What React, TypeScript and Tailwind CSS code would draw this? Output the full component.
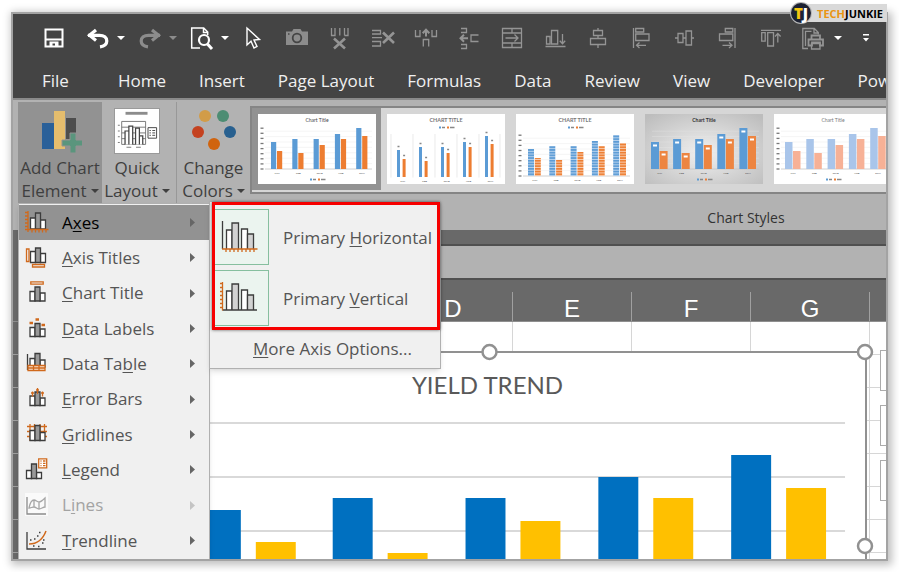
import type { ReactNode } from "react";
import clsx from "clsx";

const TABS = ["Home", "Insert", "Page Layout", "Formulas", "Data", "Review", "View", "Developer", "Power"];
// The first columns sit under the open menus, so their letters stay blank
const COLUMNS = ["", "", "", "D", "E", "F", "G", ""];
const ROWS = [1, 2, 3, 4, 5, 6, 7, 8];

const ORANGE = "#d0691c";
const INK = "#3c3c3c";

// ---------- Quick access toolbar ----------

function ToolIcon({ children, className }: { children: ReactNode; className?: string }) {
  return (
    <svg
      viewBox="0 0 24 24"
      className={clsx("size-6 shrink-0", className)}
      fill="none"
      stroke="currentColor"
      strokeWidth={1.3}
      aria-hidden="true"
    >
      {children}
    </svg>
  );
}

function Caret({ className }: { className?: string }) {
  return (
    <svg viewBox="0 0 8 4" className={clsx("h-1 w-2 shrink-0", className)} fill="currentColor" aria-hidden="true">
      <path d="M0 0h8L4 4z" />
    </svg>
  );
}

const undoShape = (
  <>
    <path d="M2 9.300h11.500c4.500 0 7.300 2.300 7.300 5.700 0 3.200-2.700 5.200-6.800 5.800" strokeWidth={3.2} />
    <path d="M10 4L3.500 9.300l6.500 5.200" strokeWidth={3.2} />
  </>
);

// Disabled commands after the pointer, in toolbar order
const TOOLS: { label: string; icon: ReactNode }[] = [
  {
    label: "Camera",
    icon: (
      <>
        <path d="M1 5.500h6l1.500-2.500h7L17 5.500h6V19H1z" fill="#8c8c8c" stroke="none" />
        <circle cx="12" cy="12" r="4.300" stroke="#444" strokeWidth={1.8} />
        <path d="M3 8h1.500" stroke="#444" />
      </>
    ),
  },
  {
    label: "Delete Columns",
    icon: (
      <>
        <path d="M3.500 2v7.500h3.500V2M11.800 2v7.500M16.500 9.500H20V2M16.500 2v7.500" />
        <path d="M6 12.500l11 10M17 12.500l-11 10" strokeWidth={2.6} />
      </>
    ),
  },
  {
    label: "Delete Rows",
    icon: (
      <>
        <path d="M1 4.500h8.500v3.500H1M1 11.700h10M1 15.500h8.500V20H1" />
        <path d="M12 6.500l11 10.500M23 6.500L12 17" strokeWidth={2.6} />
      </>
    ),
  },
  {
    label: "Insert Columns",
    icon: (
      <>
        <path d="M1.500 4v6.500H6V4M18 4v6.500h4.500V4M9.300 20.500v-7h5.400v7" />
        <path d="M12 10.500V4M8.700 7.200L12 3.800l3.300 3.400" strokeWidth={2} />
      </>
    ),
  },
  {
    label: "Insert Rows",
    icon: (
      <>
        <path d="M4 2.500h5.500v4H4M4 18.500h5.500v4H4M21.500 9H14v6.500h7.500" />
        <path d="M11 12.300H3.500M7 8.800l-3.500 3.500L7 15.800" strokeWidth={2} />
      </>
    ),
  },
  {
    label: "Merge Across",
    icon: (
      <>
        <path d="M2.500 2.500h19v19h-19zM2.500 7h19M2.500 17h19M12 2.500V7M12 17v4.500" />
        <path d="M5.500 12H18M14.500 8.500L18 12l-3.500 3.500" />
      </>
    ),
  },
  {
    label: "Align Bottom",
    icon: (
      <>
        <path d="M3.500 10.500H7V18H3.500zM8.500 4.500h6.200V18H8.500zM2.500 20.500h20" />
        <path d="M19.500 8v9.500M16.800 14.800l2.700 3 2.700-3" />
      </>
    ),
  },
  {
    label: "Align Center",
    icon: <path d="M12 2v2.500M7.500 4.500h9v5h-9zM12 9.500v3M4.500 12.500h15v6h-15zM12 18.500V22" />,
  },
  {
    label: "Align Left",
    icon: (
      <>
        <path d="M4.500 2v20M6.700 2.500h8v3.500h-8zM6.700 8h13.300v6.500H6.700z" />
        <path d="M17 19.300H7.500M10.500 16.500l-3 2.800 3 2.800" />
      </>
    ),
  },
  {
    label: "Align Middle",
    icon: <path d="M3 12h3M6 7.500h5v9H6zM11 12h3M14 5h5.500v14H14zM19.500 12H22" />,
  },
  {
    label: "Align Right",
    icon: (
      <>
        <path d="M20 2v20M10.300 2.500h7.500v3.500h-7.500zM4.500 8h13.300v6.500H4.500z" />
        <path d="M7.500 19.300H17M14 16.500l3 2.800-3 2.800" />
      </>
    ),
  },
  {
    label: "Align Top",
    icon: (
      <>
        <path d="M3 4.300h20M3.700 6.700h3.500v8.500H3.700zM9.700 6.700h5.800V20H9.700z" />
        <path d="M19.800 16.500V8M17 10.500l2.800-3 2.800 3" />
      </>
    ),
  },
  {
    label: "Print Preview",
    icon: (
      <>
        <path d="M7 22.500H1.800V2.500h11.500l4 4v2M13 2.500V7h4.300M4.500 20V5.300h6" />
        <path d="M10.500 13V9.500h8.500V13M7.500 13.500H22v6h-3v-3h-8v3H7.500z" strokeWidth={1.8} />
        <path d="M10.500 17.500h8.500v5.500h-8.500z" />
      </>
    ),
  },
];

const toolButton = "flex h-8 shrink-0 items-center justify-center";

function QuickAccess() {
  return (
    <div className="flex h-12 items-center gap-1.5 pl-5 text-white">
      <button className={clsx(toolButton, "w-[42px]")} aria-label="Save">
        <ToolIcon>
          <path d="M3.500 3.500h17v17h-17z" strokeWidth={2} />
          <path d="M4 13.500h16" strokeWidth={2} />
          <path d="M7.500 15.500h9V21H13v-3.500h-2.500V21h-3z" fill="currentColor" stroke="none" />
        </ToolIcon>
      </button>
      <div className="flex">
        <button className={clsx(toolButton, "w-[34px]")} aria-label="Undo">
          <ToolIcon>{undoShape}</ToolIcon>
        </button>
        <button className={clsx(toolButton, "w-3")} aria-label="Undo list">
          <Caret />
        </button>
      </div>
      <div className="flex text-[#8c8c8c]">
        <button className={clsx(toolButton, "w-[34px]")} aria-label="Redo">
          <ToolIcon className="-scale-x-100">{undoShape}</ToolIcon>
        </button>
        <button className={clsx(toolButton, "w-3")} aria-label="Redo list">
          <Caret />
        </button>
      </div>
      <div className="flex">
        <button className={clsx(toolButton, "w-[34px]")} aria-label="Preview">
          <ToolIcon>
            <path d="M10 22H1.700V2h12l4 4v3M13.500 2v4.500h4" strokeWidth={1.5} />
            <circle cx="14" cy="14" r="5" strokeWidth={2.2} />
            <path d="M17.500 18l4.500 5" strokeWidth={3} />
          </ToolIcon>
        </button>
        <button className={clsx(toolButton, "w-3")} aria-label="Preview list">
          <Caret />
        </button>
      </div>
      <div className="flex items-center text-[#949494]">
        <button className={clsx(toolButton, "w-8 text-white")} aria-label="Select Objects">
          <ToolIcon>
            <path d="M6 2v17l4-3.700 3 6.700 3-1.500-3-6.500 5.500-.5z" strokeWidth={1.4} />
          </ToolIcon>
        </button>
        <div className="flex pl-1.5">
          {TOOLS.map((tool) => (
            <button key={tool.label} className={clsx(toolButton, "w-[43px]")} aria-label={tool.label}>
              <ToolIcon>{tool.icon}</ToolIcon>
            </button>
          ))}
        </div>
        <button className={clsx(toolButton, "w-2 text-white")} aria-label="Print list">
          <Caret />
        </button>
        <button className={clsx(toolButton, "w-12 text-white")} aria-label="Customize Quick Access Toolbar">
          <svg viewBox="0 0 8 8" className="size-2" fill="currentColor" aria-hidden="true">
            <path d="M1 0h6v1.500H1zM1 4h6L4 7.500z" />
          </svg>
        </button>
      </div>
    </div>
  );
}

// ---------- Ribbon ----------

function AddElementIcon() {
  return (
    <svg viewBox="0 0 44 44" className="size-11" aria-hidden="true">
      <path d="M4 14h12v26H4z" fill="#2a6099" />
      <path d="M16 2h11v38H16z" fill="#e5bd6d" />
      <path d="M28 9h10v21H28z" fill="#4d4d4d" />
      <path d="M32 24h6v7h7v6h-7v7h-6v-7h-8v-6h8z" fill="#5a957d" stroke="#929292" />
    </svg>
  );
}

function QuickLayoutIcon() {
  return (
    <svg viewBox="0 0 46 46" className="size-[46px] border border-[#9a9a9a] bg-white" fill="none" stroke="#444" aria-hidden="true">
      <path d="M11 4.500h23" stroke="#8c8c8c" strokeWidth={3} />
      <path d="M7 13h25v24H7zM7 19h25M7 25h25M7 31h25" stroke="#777" />
      <path d="M10.500 37V23h4v14M14.500 37V18h4v19M21.500 37V20h4v17M25.500 37V28h3.500v9" fill="#fff" strokeWidth={1.3} />
      <path d="M3 17h2M3 23h2M3 29h2M3 35h2M12 40h5M22 40h5" stroke="#777" />
      <path d="M34.500 19.500h9v11h-9z" />
      <path d="M36 22.500h1.500M39 22.500h3M36 25h1.500M39 25h3M36 27.500h1.500M39 27.500h3" />
    </svg>
  );
}

function ChangeColorsIcon() {
  return (
    <svg viewBox="0 0 44 44" className="size-11" aria-hidden="true">
      <circle cx="13" cy="7" r="6" fill="#d29c48" />
      <circle cx="31" cy="7" r="6" fill="#4d8d73" />
      <circle cx="6" cy="23" r="6" fill="#c44220" />
      <circle cx="38" cy="23" r="6" fill="#28608f" />
      <circle cx="22" cy="35" r="6" fill="#d0640f" />
    </svg>
  );
}

function RibbonButton({
  icon,
  lines,
  className,
}: {
  icon: ReactNode;
  lines: [string, string];
  className?: string;
}) {
  return (
    <button
      className={clsx(
        "flex h-[101px] shrink-0 flex-col items-center whitespace-nowrap pt-1 text-[17px] leading-[23px] text-[#3f3f3f]",
        className,
      )}
    >
      <span className="flex h-[50px] items-center">{icon}</span>
      <span>{lines[0]}</span>
      <span className="flex items-center gap-1">
        {lines[1]}
        <Caret />
      </span>
    </button>
  );
}

interface ThumbStyle {
  title: string;
  titleWeight: number;
  titleColor: string;
  blue: string;
  orange: string;
  x: number;
  step: number;
  width: number;
  gap: number;
  base: number;
  bg: string;
  legendTop?: boolean;
  axis?: boolean;
  labels?: "above" | "inside";
  vertical?: boolean;
}

const THUMBS: ThumbStyle[] = [
  { title: "Chart Title", titleWeight: 400, titleColor: "#444", blue: "#5b9bd5", orange: "#ed7d31", x: 13, step: 21.3, width: 5.2, gap: 6, base: 55, bg: "#fff", axis: true },
  { title: "CHART TITLE", titleWeight: 700, titleColor: "#777", blue: "#5b9bd5", orange: "#ed7d31", x: 10, step: 22, width: 3, gap: 5.6, base: 63, bg: "#fff", legendTop: true, labels: "above", vertical: true },
  { title: "CHART TITLE", titleWeight: 700, titleColor: "#777", blue: "url(#stripeBlue)", orange: "url(#stripeOrange)", x: 12, step: 21.3, width: 6, gap: 6.8, base: 62, bg: "#fff", legendTop: true, axis: true },
  { title: "Chart Title", titleWeight: 700, titleColor: "#333", blue: "#5b9bd5", orange: "#ed8541", x: 6, step: 22.1, width: 8, gap: 8.6, base: 55, bg: "url(#thumbShade)", labels: "inside" },
  { title: "Chart Title", titleWeight: 400, titleColor: "#777", blue: "#a9c5ea", orange: "#f7b196", x: 11, step: 21.3, width: 7.5, gap: 8, base: 55, bg: "#fff", axis: true },
];

const BLUE_VALUES = [27, 30, 30, 35, 41];
const ORANGE_VALUES = [18, 16, 24, 30, 33];
const MONTHS = ["JAN", "FEB", "MAR", "APR", "MAY"];

function Thumb({ t }: { t: ThumbStyle }) {
  const legendY = t.legendTop ? 14.5 : 66.5;
  return (
    <svg viewBox="0 0 118 70" className="h-[70px] w-[118px]" fontFamily="Lato, sans-serif" aria-hidden="true">
      <rect width="118" height="70" fill={t.bg} />
      <text x="59" y="7.500" fontSize={t.legendTop ? 5.4 : 5} fontWeight={t.titleWeight} fill={t.titleColor} textAnchor="middle">
        {t.title}
      </text>
      {!t.vertical &&
        [0, 1, 2, 3, 4, 5, 6, 7].map((i) => (
          <path key={i} d={`M7 ${t.base - i * 5.4}H114`} stroke={i ? "#e6e6e6" : "#c4c4c4"} strokeWidth={i ? 0.4 : 0.8} />
        ))}
      {t.vertical &&
        [4, 26, 48, 70, 92, 113].map((x) => <path key={x} d={`M${x} 20V63.500`} stroke="#dcdcdc" strokeWidth=".6" />)}
      {t.axis &&
        [0, 1, 2, 3, 4, 5, 6, 7, 8].map((i) => (
          <path key={i} d={`M2.500 ${t.base - i * 5.1}h3`} stroke="#777" strokeWidth="1.300" />
        ))}
      {BLUE_VALUES.map((v, i) => {
        const x = t.x + i * t.step;
        const o = ORANGE_VALUES[i];
        return (
          <g key={i}>
            <rect x={x} y={t.base - v} width={t.width} height={v} fill={t.blue} />
            <rect x={x + t.gap} y={t.base - o} width={t.width} height={o} fill={t.orange} />
            {t.labels === "above" && (
              <path
                d={`M${x + 0.5} ${t.base - v - 3.5}h2M${x + t.gap + 0.5} ${t.base - o - 3.5}h2`}
                stroke="#888"
                strokeWidth="1.600"
              />
            )}
            {t.labels === "inside" && (
              <path
                d={`M${x + 2} ${t.base - v + 3.5}h4M${x + t.gap + 2} ${t.base - o + 3.5}h4`}
                stroke="#fff"
                strokeWidth="2"
              />
            )}
            <text x={x + t.gap} y={t.base + 4.6} fontSize="2.600" fontWeight="700" fill="#555" textAnchor="middle">
              {MONTHS[i]}
            </text>
          </g>
        );
      })}
      <rect x="52" y={legendY - 2} width="2" height="2" fill="#5b9bd5" />
      <rect x="60" y={legendY - 2} width="2" height="2" fill="#ed7d31" />
      <path d={`M55 ${legendY - 1}h3M63 ${legendY - 1}h4.500`} stroke="#888" strokeWidth="1.400" />
    </svg>
  );
}

function ChartStyles() {
  return (
    <div className="flex w-[992px] shrink-0 flex-col pt-1.5">
      <svg className="absolute size-0" aria-hidden="true">
        <defs>
          <pattern id="stripeBlue" width="4" height="2.700" patternUnits="userSpaceOnUse">
            <rect width="4" height="2.700" fill="#b9d3ee" />
            <rect width="4" height="1.700" fill="#5b9bd5" />
          </pattern>
          <pattern id="stripeOrange" width="4" height="2.700" patternUnits="userSpaceOnUse">
            <rect width="4" height="2.700" fill="#f9cfb2" />
            <rect width="4" height="1.700" fill="#ed7d31" />
          </pattern>
          <radialGradient id="thumbShade" cx=".5" cy=".55" r=".7">
            <stop offset="0" stopColor="#f0f0f0" />
            <stop offset="1" stopColor="#bdbdbd" />
          </radialGradient>
        </defs>
      </svg>
      <div className="flex border-2 border-[#858585] bg-[#d6d6d6] pb-0.5">
        {THUMBS.map((t, i) => (
          <button
            key={i}
            aria-label={`Style ${i + 1}`}
            className={clsx("flex h-[82px] w-[129px] shrink-0 items-center justify-center", i === 0 && "bg-[#929292]")}
          >
            <Thumb t={t} />
          </button>
        ))}
      </div>
      <div className="flex flex-1 items-center justify-center pt-2.5 text-[14px] text-[#333]">Chart Styles</div>
    </div>
  );
}

function Ribbon() {
  return (
    <div className="flex h-[132px] overflow-hidden border-t-2 border-[#8a8a8a] bg-[#b2b2b2] pl-[5px]">
      <div className="flex pt-0.5">
        <RibbonButton className="w-[84px] bg-[#929292]" icon={<AddElementIcon />} lines={["Add Chart", "Element"]} />
        <RibbonButton className="w-[70px]" icon={<QuickLayoutIcon />} lines={["Quick", "Layout"]} />
        <div className="ml-1 w-px bg-[#989898]" />
        <RibbonButton className="w-[73px]" icon={<ChangeColorsIcon />} lines={["Change", "Colors"]} />
      </div>
      <ChartStyles />
    </div>
  );
}

// ---------- Menus ----------

function MenuIcon({ children }: { children: ReactNode }) {
  return (
    <svg viewBox="0 0 26 24" className="h-6 w-[26px] shrink-0" fill="none" stroke={ORANGE} strokeWidth={1.3} aria-hidden="true">
      {children}
    </svg>
  );
}

// Three columns sharing one baseline; the middle one is shaded
function Bars({ x = 6, base, tops }: { x?: number; base: number; tops: [number, number, number] }) {
  return (
    <g stroke={INK} strokeWidth={1.3}>
      <path d={`M${x} ${base}V${tops[0]}h5V${base}z`} fill="#fff" />
      <path d={`M${x + 10} ${base}V${tops[2]}h5V${base}z`} fill="#fff" />
      <path d={`M${x + 5} ${base}V${tops[1]}h5V${base}z`} fill="#999" />
    </g>
  );
}

interface MenuEntry {
  before: string;
  key: string;
  after: string;
  icon: ReactNode;
  state?: "open" | "disabled";
}

const MENU: MenuEntry[] = [
  {
    before: "A",
    key: "x",
    after: "es",
    state: "open",
    icon: (
      <>
        <Bars x={6.5} base={18} tops={[7, 2, 9]} />
        <path d="M4 0v21M1 18.500h23.500M1 1.500h3M1 5h3M1 8.500h3M1 12h3M1 15.500h3M8 18.500v3M11.500 18.500v3M15 18.500v3M18.500 18.500v3M22 18.500v3" />
      </>
    ),
  },
  {
    before: "",
    key: "A",
    after: "xis Titles",
    icon: (
      <>
        <Bars x={6.5} base={16.5} tops={[5.5, 2, 7.5]} />
        <path d="M2.500 3h2.500v12.500H2.500zM8.500 18.500h12v2.500h-12z" />
      </>
    ),
  },
  {
    before: "",
    key: "C",
    after: "hart Title",
    icon: (
      <>
        <Bars base={20} tops={[10.5, 6, 12]} />
        <path d="M6.800 .8h12.400v2.400H6.800z" />
      </>
    ),
  },
  {
    before: "",
    key: "D",
    after: "ata Labels",
    icon: (
      <>
        <Bars base={19.5} tops={[10.5, 6.5, 12]} />
        <path d="M5.500 6h3.500M11.500 2.500H15M17.500 8H21" strokeWidth={2.4} />
      </>
    ),
  },
  {
    before: "Data Ta",
    key: "b",
    after: "le",
    icon: (
      <>
        <path d="M3.500 2v16" stroke={INK} />
        <Bars base={15} tops={[6.5, 1.5, 8]} />
        <path d="M4 13.500h17v5H4z" fill="#fbe3d0" />
        <path d="M4 16h17M9.500 13.500v5M15 13.500v5" />
      </>
    ),
  },
  {
    before: "",
    key: "E",
    after: "rror Bars",
    icon: (
      <>
        <Bars base={18.5} tops={[9, 5, 11]} />
        <path d="M8.500 4.500v5M7 6h3M13.500 1v6M12 3h3M18.500 4.500v5M17 6h3" />
      </>
    ),
  },
  {
    before: "",
    key: "G",
    after: "ridlines",
    icon: (
      <>
        <path d="M3 4.500h20M3 9.500h20M3 14.500h20M6 2v17M10.500 2v17M16 2v17M20.500 2v17" />
        <Bars base={18.5} tops={[8.5, 3.5, 10.5]} />
      </>
    ),
  },
  {
    before: "",
    key: "L",
    after: "egend",
    icon: (
      <>
        <Bars x={2.5} base={20.5} tops={[12.5, 6, 14.5]} />
        <path d="M14.700 .8h8v9h-8z" fill="#fff" />
        <path d="M16.500 3h1M19 3h2.500M16.500 5.300h1M19 5.300h2.500M16.500 7.600h1M19 7.600h2.500" />
      </>
    ),
  },
  {
    before: "L",
    key: "i",
    after: "nes",
    state: "disabled",
    icon: (
      <>
        <path d="M1 0h23v23H1z" fill="#fafafa" stroke="none" />
        <path d="M3 4v17h19" stroke="#8c8c8c" />
        <path d="M5 15c1-5 3-8 5-8s3 2 5 2 4-2 6-4v9c-2 0-4 2-6 2s-3-2-5-2-3 1-5 1zM10 7v7M15 9v7" stroke="#a6a6a6" />
      </>
    ),
  },
  {
    before: "",
    key: "T",
    after: "rendline",
    icon: (
      <>
        <path d="M3 4v17h19" stroke={INK} />
        <path d="M5 16c8 0 14-5 17-13" strokeWidth={1.5} />
        <path d="M6 12h1.500M10 11h1.500M13 8h1.500M15 4.500h1.500M9 18h1.500M14 18.500h1.500M18 15h1.500M19 12h1.500" stroke={INK} strokeWidth={1.5} />
      </>
    ),
  },
];

function ElementMenu() {
  return (
    <div
      role="menu"
      aria-label="Add Chart Element"
      className="absolute bottom-0 left-[5px] top-[189px] flex w-48 flex-col border border-b-0 border-[#b0b0b0] bg-[#f0f0f0] pb-px pt-px shadow-md"
    >
      {MENU.map((entry) => (
        <button
          key={entry.before + entry.key + entry.after}
          role="menuitem"
          disabled={entry.state === "disabled"}
          className={clsx(
            "flex min-h-[34px] flex-1 items-center whitespace-nowrap pl-[5px] pr-[14px] text-left text-[17px]",
            entry.state === "open" && "bg-[#929292] text-black",
            entry.state === "disabled" && "text-[#a3a3a3]",
            !entry.state && "text-[#555]",
          )}
        >
          <MenuIcon>{entry.icon}</MenuIcon>
          <span className="flex-1 pl-3">
            {entry.before}
            <u className="underline-offset-2">{entry.key}</u>
            {entry.after}
          </span>
          <svg
            viewBox="0 0 5 9"
            className={clsx("h-[9px] w-[5px]", entry.state === "disabled" ? "text-[#c4c4c4]" : "text-[#666]")}
            fill="currentColor"
            aria-hidden="true"
          >
            <path d="M0 0l5 4.500L0 9z" />
          </svg>
        </button>
      ))}
    </div>
  );
}

function AxisIcon({ vertical }: { vertical?: boolean }) {
  return (
    <svg viewBox="0 0 38 36" className="h-9 w-[38px]" fill="none" strokeWidth={1.3} aria-hidden="true">
      <path d="M6.500 30V11H12v19M21.500 30V10h6v20" stroke={INK} fill="#fff" />
      <path d="M12 30V4h6.500v26M27.500 30V15h6v15" stroke={INK} fill="#d2d2d2" />
      {vertical ? (
        <>
          <path d="M2.500 30h34.500" stroke={INK} />
          <path d="M2.500 2v28.500M0 3.500h2.500M0 7.500h2.500M0 11.500h2.500M0 15.500h2.500M0 19.500h2.500M0 23.500h2.500M0 27.500h2.500" stroke={ORANGE} />
        </>
      ) : (
        <>
          <path d="M2.500 2v28" stroke={INK} />
          <path d="M2 30h35.500M6 30v3M10 30v3M14 30v3M18 30v3M22 30v3M26 30v3M30 30v3M34 30v3" stroke={ORANGE} />
        </>
      )}
    </svg>
  );
}

function AxisOption({ keyChar, rest, vertical }: { keyChar: string; rest: string; vertical?: boolean }) {
  return (
    <button role="menuitemcheckbox" aria-checked="true" className="flex items-center text-left">
      <span className="flex h-14 w-[54px] items-center justify-center border border-l-0 border-[#86bf9f] bg-[#ebf4ef] pr-1.5">
        <AxisIcon vertical={vertical} />
      </span>
      <span className="pl-[14px] pt-px">
        Primary <u className="underline-offset-2">{keyChar}</u>
        {rest}
      </span>
    </button>
  );
}

function AxesSubmenu() {
  return (
    <div
      role="menu"
      aria-label="Axes"
      className="absolute left-[196px] top-[187px] w-[232px] whitespace-nowrap border border-[#b0b0b0] bg-[#f0f0f0] text-[17px] text-[#555] shadow-md"
    >
      <div className="ml-0.5 flex flex-col gap-[5px] border-[3px] border-[#f60000] pb-px pt-1 shadow-[0_0_3px_rgba(0,0,0,0.6)]">
        <AxisOption keyChar="H" rest="orizontal" />
        <AxisOption keyChar="V" rest="ertical" vertical />
      </div>
      <button role="menuitem" className="flex h-[38px] w-full items-center pl-[43px]">
        <span>
          <u className="underline-offset-2">M</u>ore Axis Options...
        </span>
      </button>
    </div>
  );
}

// ---------- Worksheet ----------

const SERIES = [
  { x: 87, blue: 157, yellow: 189 },
  { x: 219, blue: 145, yellow: 200 },
  { x: 352, blue: 145, yellow: 168 },
  { x: 485, blue: 124, yellow: 145 },
  { x: 618, blue: 102, yellow: 135 },
];

function YieldChart() {
  return (
    <div className="absolute left-[99px] right-[19px] top-[29px] h-[392px] border-2 border-[#919191] bg-white">
      <h2 className="pt-4 pr-1 text-center font-['Lato'] text-[24px] leading-8 text-[#595959]">YIELD TREND</h2>
      <svg
        viewBox="0 0 752 388"
        preserveAspectRatio="none"
        className="absolute inset-0 size-full overflow-visible"
        role="img"
        aria-label="Yield trend columns"
      >
        <path d="M40 70h692M40 124h692M40 178h692" stroke="#d9d9d9" strokeWidth={2} />
        {SERIES.map((s) => (
          <g key={s.x}>
            <rect x={s.x} y={s.blue} width="40" height={360 - s.blue} fill="#0070c0" />
            <rect x={s.x + 55} y={s.yellow} width="40" height={360 - s.yellow} fill="#ffc000" />
          </g>
        ))}
        <g fill="#fff" stroke="#919191" strokeWidth={2.5}>
          <circle cx="376" cy="-1" r="7" />
          <circle cx="752" cy="-1" r="7" />
          <circle cx="752" cy="193" r="7" />
        </g>
      </svg>
    </div>
  );
}

function Worksheet() {
  return (
    <div className="flex min-h-0 flex-1 flex-col overflow-hidden">
      <div className="flex h-[92px] shrink-0 flex-col bg-[#696969]">
        <div className="ml-2 mt-[14px] h-[36px] shrink-0 border-y-2 border-[#505050] bg-[#b2b2b2]" />
        <div className="flex flex-1 items-end border-b border-[#8f8f8f] pl-6">
          {COLUMNS.map((c, i) => (
            <div
              key={i}
              className="flex h-[29px] w-[119px] shrink-0 items-center justify-center border-r border-[#a0a0a0] pt-1 font-['Liberation_Sans'] text-[24px] leading-6 text-white"
            >
              {c}
            </div>
          ))}
        </div>
      </div>
      <div className="relative min-h-0 flex-1 overflow-hidden bg-white">
        {ROWS.map((r) => (
          <div key={r} className="flex h-[33px]">
            <div className="w-6 shrink-0 border-b border-[#a0a0a0] bg-[#696969]" />
            {COLUMNS.map((_, i) => (
              <div key={i} className="w-[119px] shrink-0 border-b border-r border-[#d6d6d6]" />
            ))}
          </div>
        ))}
        <div className="absolute -right-9 top-[28px] flex flex-col gap-[14px]">
          {["Chart Elements", "Chart Styles", "Chart Filters"].map((label) => (
            <button key={label} aria-label={label} className="h-[41px] w-[42px] border border-[#ababab] bg-white" />
          ))}
        </div>
        <YieldChart />
      </div>
    </div>
  );
}

function Logo() {
  return (
    <div className="absolute right-3 top-1 flex h-[18px] items-center bg-[#d9d9d9] px-1 font-['Open_Sans'] text-[11px] font-bold leading-none">
      <span className="absolute -left-4 flex size-5 items-center justify-center rounded-full bg-[#1d2233] text-[15px] font-extrabold ring-1 ring-[#b8b8b8]">
        <span className="text-[#f5c711]">T</span>
        <span className="text-white">J</span>
      </span>
      <span className="pl-1.5 text-[#ea9412]">TECH</span>
      <span className="text-black">JUNKIE</span>
    </div>
  );
}

export default function App() {
  return (
    <div className="relative h-screen overflow-hidden bg-white px-[11px] pb-[11px] pt-3 font-['Open_Sans',sans-serif]">
      <div className="relative flex h-full flex-col overflow-hidden border-2 border-[#a3a3a3] shadow-[2px_2px_8px_2px_rgba(0,0,0,0.25)]">
        <div className="bg-[#444444]">
          <QuickAccess />
          <nav className="flex h-9 items-center gap-[33px] whitespace-nowrap pl-[29px] pt-px text-[17px] text-[#f0f0f0]">
            <button className="pr-4">File</button>
            {TABS.map((tab) => (
              <button key={tab}>{tab}</button>
            ))}
          </nav>
        </div>
        <Ribbon />
        <Worksheet />
        <ElementMenu />
        <AxesSubmenu />
      </div>
      <Logo />
    </div>
  );
}
